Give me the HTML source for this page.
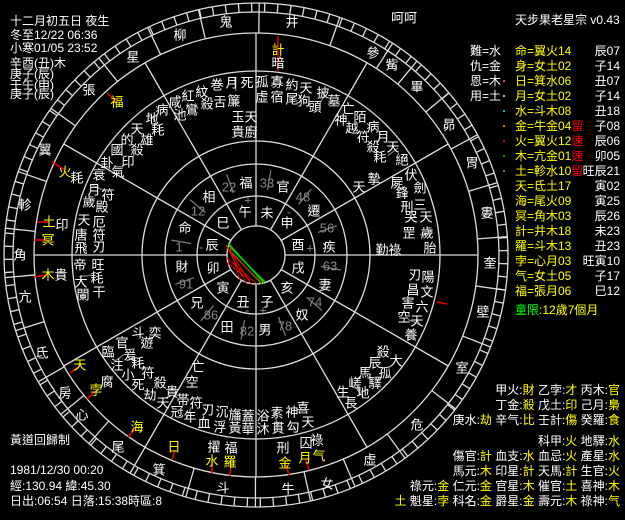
<!DOCTYPE html>
<html><head><meta charset="utf-8">
<style>
html,body{margin:0;padding:0;background:#000;width:625px;height:520px;overflow:hidden}
svg{display:block}
text{font-family:"Liberation Sans","Noto Sans CJK TC","WenQuanYi Zen Hei",sans-serif;dominant-baseline:central}
.c text{font-size:13px;fill:#fff;text-anchor:middle}
.y{fill:#ff0 !important}
.g{fill:#888 !important}
.t{font-size:12px;fill:#fff}
</style></head><body>
<svg id="s" width="625" height="520" viewBox="0 0 625 520" xmlns="http://www.w3.org/2000/svg">
<rect width="625" height="520" fill="#000"/>
<g id="geo" stroke="#ddd" stroke-width="1.3" fill="none">
<circle cx="256" cy="255" r="252"/>
<circle cx="256" cy="255" r="243"/>
<circle cx="256" cy="255" r="222"/>
<circle cx="256" cy="255" r="184"/>
<circle cx="256" cy="255" r="114"/>
<circle cx="256" cy="255" r="91"/>
<circle cx="256" cy="255" r="59"/>
<circle cx="256" cy="255" r="29"/>
</g>
<g stroke="#0c0" stroke-width="1.5"><line x1="228" y1="243" x2="264" y2="283"/><line x1="227" y1="248" x2="262" y2="284"/><line x1="229" y1="246" x2="265" y2="282"/></g>
<g stroke="#e00" stroke-width="1"><line x1="226" y1="245" x2="246" y2="283"/><line x1="226" y1="245" x2="252" y2="285"/><line x1="227" y1="258" x2="257" y2="284"/><line x1="228" y1="250" x2="262" y2="283"/><line x1="226" y1="262" x2="250" y2="280"/><line x1="230" y1="247" x2="240" y2="280"/></g>
<g stroke="#e00" stroke-width="1.5">
<line x1="107" y1="93" x2="117" y2="102"/><line x1="52" y1="162" x2="65" y2="170"/><line x1="37" y1="222" x2="49" y2="222"/><line x1="34" y1="240" x2="47" y2="240"/><line x1="34" y1="277" x2="47" y2="275"/>
<line x1="70" y1="373" x2="80" y2="366"/><line x1="87" y1="399" x2="96" y2="391"/><line x1="128" y1="437" x2="136" y2="428"/><line x1="172" y1="460" x2="175" y2="450"/><line x1="212" y1="474" x2="212" y2="462"/><line x1="230" y1="476" x2="231" y2="463"/><line x1="289" y1="475" x2="286" y2="465"/><line x1="309" y1="470" x2="306" y2="460"/><line x1="278" y1="36" x2="278" y2="71"/><line x1="437" y1="302" x2="447" y2="304"/>
</g>
<g class="c">
<!-- mansions -->
<text x="20" y="255">角</text><text x="25" y="297">亢</text><text x="42" y="353">氐</text><text x="65" y="393">房</text><text x="82" y="415">心</text><text x="118" y="447">尾</text><text x="159" y="470">箕</text><text x="223" y="488">斗</text><text x="288" y="489">牛</text><text x="327" y="484">女</text><text x="370" y="460">虛</text><text x="417" y="425">危</text><text x="462" y="368">室</text><text x="483" y="312">壁</text><text x="490" y="263">奎</text><text x="487" y="213">婁</text><text x="472" y="163">胃</text><text x="449" y="125">昴</text><text x="417" y="87">畢</text><text x="392" y="65">觜</text><text x="373" y="53">參</text><text x="292" y="22">井</text><text x="226" y="22">鬼</text><text x="180" y="35">柳</text><text x="133" y="57">星</text><text x="89" y="90">張</text><text x="45" y="150">翼</text><text x="25" y="205">軫</text>
<text x="404" y="18">呵呵</text>
<!-- planets -->
<text class="y" x="117" y="102">福</text><text class="y" x="65" y="172">火</text><text x="77" y="178">耗</text><text class="y" x="49" y="222">土</text><text x="62" y="225">印</text><text class="y" x="48" y="240">冥</text><text class="y" x="48" y="275">木</text><text x="61" y="275">貴</text>
<text class="y" x="80" y="365">天</text><text class="y" x="96" y="390">孛</text><text x="107" y="382">腐</text><text class="y" x="137" y="427">海</text><text class="y" x="174" y="447">日</text><text x="214" y="447">擢</text><text class="y" x="212" y="461">水</text><text x="231" y="448">福</text><text class="y" x="230" y="462">羅</text><text x="283" y="448">刑</text><text class="y" x="285" y="463">金</text><text x="306" y="443">囚</text><text class="y" x="305" y="458">月</text><text x="317" y="440">祿</text><text class="y" x="319" y="456">气</text>
<text class="y" x="278" y="50">計</text><text x="278" y="63">暗</text>
<!-- stars top -->
<text x="262" y="82">孤</text><text x="277" y="82">寡</text><text x="292" y="85">約</text><text x="306" y="88">天</text><text x="323" y="93">披</text><text x="334" y="101">墓</text><text x="262" y="97">虛</text><text x="277" y="97">宿</text><text x="292" y="99">尾</text><text x="304" y="101">狗</text><text x="315" y="107">頭</text>
<text x="247" y="83">死</text><text x="232" y="83">月</text><text x="217" y="85">巻</text><text x="202" y="92">紋</text><text x="188" y="96">紅</text><text x="175" y="102">咸</text><text x="234" y="101">簾</text><text x="220" y="102">舌</text><text x="207" y="104">殺</text><text x="192" y="110">鸞</text><text x="180" y="115">池</text><text x="162" y="110">病</text><text x="152" y="119">地</text><text x="158" y="130">耗</text><text x="137" y="129">天</text><text x="147" y="140">雄</text><text x="127" y="140">的</text><text x="137" y="150">殺</text><text x="117" y="150">國</text><text x="128" y="162">印</text><text x="107" y="163">卦</text><text x="118" y="172">氣</text>
<text x="238" y="117">玉</text><text x="251" y="117">天</text><text x="238" y="132">貴</text><text x="251" y="132">廚</text>
<!-- left -->
<text x="99" y="175">衰</text><text x="94" y="190">月</text><text x="108" y="195">符</text><text x="89" y="202">歲</text><text x="102" y="207">殿</text><text x="84" y="220">天</text><text x="99" y="222">厄</text><text x="81" y="235">唐</text><text x="99" y="235">符</text><text x="81" y="248">飛</text><text x="99" y="247">刃</text><text x="80" y="265">帝</text><text x="98" y="265">旺</text><text x="81" y="282">大</text><text x="97" y="278">耗</text><text x="83" y="295">闌</text><text x="99" y="292">干</text>
<!-- bottom left -->
<text x="138" y="333">斗</text><text x="155" y="333">奕</text><text x="147" y="343">遊</text><text x="122" y="343">官</text><text x="108" y="352">臨</text><text x="130" y="355">爰</text><text x="117" y="365">注</text><text x="138" y="363">耗</text><text x="128" y="375">小</text><text x="148" y="373">符</text><text x="160" y="383">殺</text><text x="138" y="385">死</text><text x="150" y="395">劫</text><text x="172" y="392">貴</text><text x="163" y="403">天</text><text x="183" y="400">帯</text><text x="196" y="403">符</text><text x="177" y="412">冠</text><text x="190" y="417">年</text><text x="208" y="410">刃</text><text x="204" y="423">血</text><text x="222" y="412">沉</text><text x="220" y="427">浮</text><text x="235" y="415">旛</text><text x="235" y="428">黃</text><text x="248" y="416">蓋</text><text x="248" y="429">華</text><text x="263" y="416">浴</text><text x="263" y="429">沐</text><text x="277" y="413">素</text><text x="278" y="428">貫</text><text x="292" y="412">神</text><text x="293" y="427">勾</text><text x="303" y="408">喜</text><text x="308" y="422">天</text><text x="198" y="367">亡</text><text x="192" y="382">空</text>
<!-- right -->
<text x="348" y="109">亡</text><text x="360" y="117">陌</text><text x="341" y="120">神</text><text x="352" y="128">越</text><text x="373" y="127">病</text><text x="363" y="137">符</text><text x="383" y="137">月</text><text x="373" y="147">殺</text><text x="393" y="147">天</text><text x="380" y="157">耗</text><text x="402" y="160">絕</text><text x="411" y="175">伏</text><text x="374" y="179">摯</text><text x="397" y="183">屍</text><text x="359" y="187">天</text><text x="420" y="188">劍</text><text x="402" y="193">鋒</text><text x="420" y="205">三</text><text x="407" y="207">刑</text><text x="426" y="217">天</text><text x="411" y="217">哭</text><text x="427" y="233">歲</text><text x="409" y="233">罡</text><text x="430" y="248">胎</text><text x="382" y="250">勤</text><text x="395" y="250">祿</text>
<text x="415" y="275">刃</text><text x="428" y="277">陽</text><text x="413" y="290">昌</text><text x="427" y="292">文</text><text x="408" y="303">害</text><text x="422" y="307">六</text><text x="404" y="317">空</text><text x="417" y="321">天</text><text x="411" y="335">養</text><text x="383" y="352">殺</text><text x="396" y="361">大</text><text x="375" y="363">辰</text><text x="365" y="373">馬</text><text x="385" y="373">孤</text><text x="355" y="383">嵯</text><text x="375" y="383">驛</text><text x="343" y="392">生</text><text x="363" y="393">地</text><text x="351" y="403">長</text>
<!-- inner -->
<text x="245" y="212">午</text><text x="267" y="213">未</text><text x="287" y="223">申</text><text x="298" y="245">酉</text><text x="298" y="268">戌</text><text x="287" y="288">亥</text><text x="267" y="302">子</text><text x="243" y="302">丑</text><text x="223" y="288">寅</text><text x="213" y="268">卯</text><text x="212" y="245">辰</text><text x="223" y="223">巳</text>
<text class="g" x="248" y="200">+</text><text class="g" x="289" y="212">-</text><text class="g" x="310" y="248">+</text><text class="g" x="201" y="247">-</text><text class="g" x="247" y="310">-</text><text class="g" x="263" y="310">+</text>
<text x="246" y="183">福</text><text class="g" x="229" y="187">22</text><text x="283" y="187">官</text><text class="g" x="267" y="183">33</text><text x="314" y="211">遷</text><text class="g" x="303" y="197">48</text><text x="329" y="247">疾</text><text class="g" x="327" y="228">56</text><text x="325" y="285">妻</text><text class="g" x="330" y="266">63</text><text x="302" y="315">奴</text><text class="g" x="315" y="302">74</text><text x="265" y="330">男</text><text class="g" x="285" y="326">78</text><text x="227" y="327">田</text><text class="g" x="247" y="331">82</text><text x="197" y="303">兄</text><text class="g" x="211" y="315">86</text><text x="182" y="267">財</text><text class="g" x="186" y="284">91</text><text x="185" y="228">命</text><text class="g" x="179" y="247">1</text><text x="209" y="197">相</text><text class="g" x="198" y="211">12</text>
</g>
<!-- top-left -->
<g class="t">
<text x="10" y="21">十二月初五日 夜生</text>
<text x="10" y="35">冬至12/22 06:36</text>
<text x="10" y="48">小寒01/05 23:52</text>
<text x="10" y="63">辛酉(丑)木</text>
<text x="10" y="74">庚子(辰)</text>
<text x="10" y="85">壬午(申)</text>
<text x="10" y="94">庚子(辰)</text>
<text x="10" y="440">黃道回歸制</text>
<text x="10" y="470">1981/12/30 00:20</text>
<text x="10" y="486">經:130.94 緯:45.30</text>
<text x="10" y="501">日出:06:54 日落:15:38時區:8</text>
<text x="515" y="20">天步果老星宗 v0.43</text>
<text x="470" y="51">難=水</text><text x="470" y="66">仇=金</text><text x="470" y="81">恩=木</text><text x="470" y="96">用=土</text>
</g>
<g class="t" fill="#ff0" style="fill:#ff0">
<text x="515" y="51" style="fill:#ff0">命=翼火14</text>
<text x="515" y="66" style="fill:#ff0">身=女土02</text>
<text x="515" y="81" style="fill:#ff0">日=箕水06</text>
<text x="515" y="96" style="fill:#ff0">月=女土02</text>
<text x="515" y="111" style="fill:#ff0">水=斗木08</text>
<text x="515" y="126" style="fill:#ff0">金=牛金04<tspan style="fill:#f00">留</tspan></text>
<text x="515" y="141" style="fill:#ff0">火=翼火12<tspan style="fill:#f00">速</tspan></text>
<text x="515" y="156" style="fill:#ff0">木=亢金01<tspan style="fill:#f00">速</tspan></text>
<text x="515" y="171" style="fill:#ff0">土=軫水10<tspan style="fill:#f00">留</tspan></text>
<text x="515" y="186" style="fill:#ff0">天=氐土17</text>
<text x="515" y="201" style="fill:#ff0">海=尾火09</text>
<text x="515" y="216" style="fill:#ff0">冥=角木03</text>
<text x="515" y="231" style="fill:#ff0">計=井木18</text>
<text x="515" y="246" style="fill:#ff0">羅=斗木13</text>
<text x="515" y="261" style="fill:#ff0">孛=心月03</text>
<text x="515" y="276" style="fill:#ff0">气=女土05</text>
<text x="515" y="291" style="fill:#ff0">福=張月06</text>
<text x="515" y="310"><tspan style="fill:#0f0">童限</tspan>:12歲7個月</text>
</g>
<g class="t" text-anchor="end">
<text x="620" y="51">辰07</text><text x="620" y="66">子14</text><text x="620" y="81">丑07</text><text x="620" y="96">子14</text><text x="620" y="111">丑18</text><text x="620" y="126">子08</text><text x="620" y="141">辰06</text><text x="620" y="156">卯05</text><text x="620" y="171">旺辰21</text><text x="620" y="186">寅02</text><text x="620" y="201">寅25</text><text x="620" y="216">辰26</text><text x="620" y="231">未23</text><text x="620" y="246">丑23</text><text x="620" y="261">旺寅10</text><text x="620" y="276">子17</text><text x="620" y="291">巳12</text>
</g>
<g>
<circle cx="504" cy="81" r="1" fill="#f6c"/><circle cx="504" cy="96" r="1" fill="#fff"/><circle cx="504" cy="111" r="1" fill="#0ff"/><circle cx="504" cy="126" r="1" fill="#fa0"/><circle cx="504" cy="141" r="1" fill="#f00"/><circle cx="504" cy="156" r="1" fill="#0c0"/><circle cx="504" cy="171" r="1" fill="#c6c"/>
</g>
<g class="t" text-anchor="end">
<text x="620" y="390">甲火:<tspan style="fill:#ff0">財</tspan> 乙孛:<tspan style="fill:#ff0">才</tspan> 丙木:<tspan style="fill:#ff0">官</tspan></text>
<text x="620" y="405">丁金:<tspan style="fill:#ff0">殺</tspan> 戊土:<tspan style="fill:#ff0">印</tspan> 己月:<tspan style="fill:#ff0">梟</tspan></text>
<text x="620" y="420">庚水:<tspan style="fill:#ff0">劫</tspan> 辛气:<tspan style="fill:#ff0">比</tspan> 壬計:<tspan style="fill:#ff0">傷</tspan> 癸羅:<tspan style="fill:#ff0">食</tspan></text>
<text x="620" y="441">科甲:<tspan style="fill:#ff0">火</tspan> 地驛:<tspan style="fill:#ff0">水</tspan></text>
<text x="620" y="456">傷官:<tspan style="fill:#ff0">計</tspan> 血支:<tspan style="fill:#ff0">水</tspan> 血忌:<tspan style="fill:#ff0">火</tspan> 產星:<tspan style="fill:#ff0">水</tspan></text>
<text x="620" y="471">馬元:<tspan style="fill:#ff0">木</tspan> 印星:<tspan style="fill:#ff0">計</tspan> 天馬:<tspan style="fill:#ff0">計</tspan> 生官:<tspan style="fill:#ff0">火</tspan></text>
<text x="620" y="486">祿元:<tspan style="fill:#ff0">金</tspan> 仁元:<tspan style="fill:#ff0">金</tspan> 官星:<tspan style="fill:#ff0">木</tspan> 催官:<tspan style="fill:#ff0">土</tspan> 喜神:<tspan style="fill:#ff0">木</tspan></text>
<text x="620" y="501"><tspan style="fill:#ff0">土</tspan> 魁星:<tspan style="fill:#ff0">孛</tspan> 科名:<tspan style="fill:#ff0">金</tspan> 爵星:<tspan style="fill:#ff0">金</tspan> 壽元:<tspan style="fill:#ff0">木</tspan> 祿神:<tspan style="fill:#ff0">气</tspan></text>
</g>
</svg>
<script>
(function(){
var g=document.getElementById('geo'),cx=256,cy=255,NS='http://www.w3.org/2000/svg';
function ln(a,r1,r2,col){var t=a*Math.PI/180,l=document.createElementNS(NS,'line');
l.setAttribute('x1',cx+r1*Math.cos(t));l.setAttribute('y1',cy-r1*Math.sin(t));
l.setAttribute('x2',cx+r2*Math.cos(t));l.setAttribute('y2',cy-r2*Math.sin(t));
if(col){l.setAttribute('stroke',col);}g.appendChild(l);}
for(var i=0;i<12;i++)ln(i*30,29,222);
for(var a=0;a<360;a+=3)ln(a+1,243,252);
var m=[[20,255],[25,297],[42,353],[65,393],[82,415],[118,447],[159,470],[223,488],[288,489],[327,484],[370,460],[417,425],[462,368],[483,312],[490,263],[487,213],[472,163],[449,125],[417,87],[392,65],[373,53],[292,22],[226,22],[180,35],[133,57],[89,90],[45,150],[25,205]];
var ang=m.map(function(p){var v=Math.atan2(cy-p[1],p[0]-cx)*180/Math.PI;return v<0?v+360:v;});
ang.sort(function(a,b){return a-b});
for(var k=0;k<ang.length;k++){var a1=ang[k],a2=ang[(k+1)%ang.length];if(a2<a1)a2+=360;ln((a1+a2)/2,222,252);}
var gr=[15,45,75,105,135,165,195,225,255,285,315,345];
gr.forEach(function(a){ln(a+5,66,86,'#777');ln(a-8,165,178,'#777');});
})();
</script>
</body></html>
